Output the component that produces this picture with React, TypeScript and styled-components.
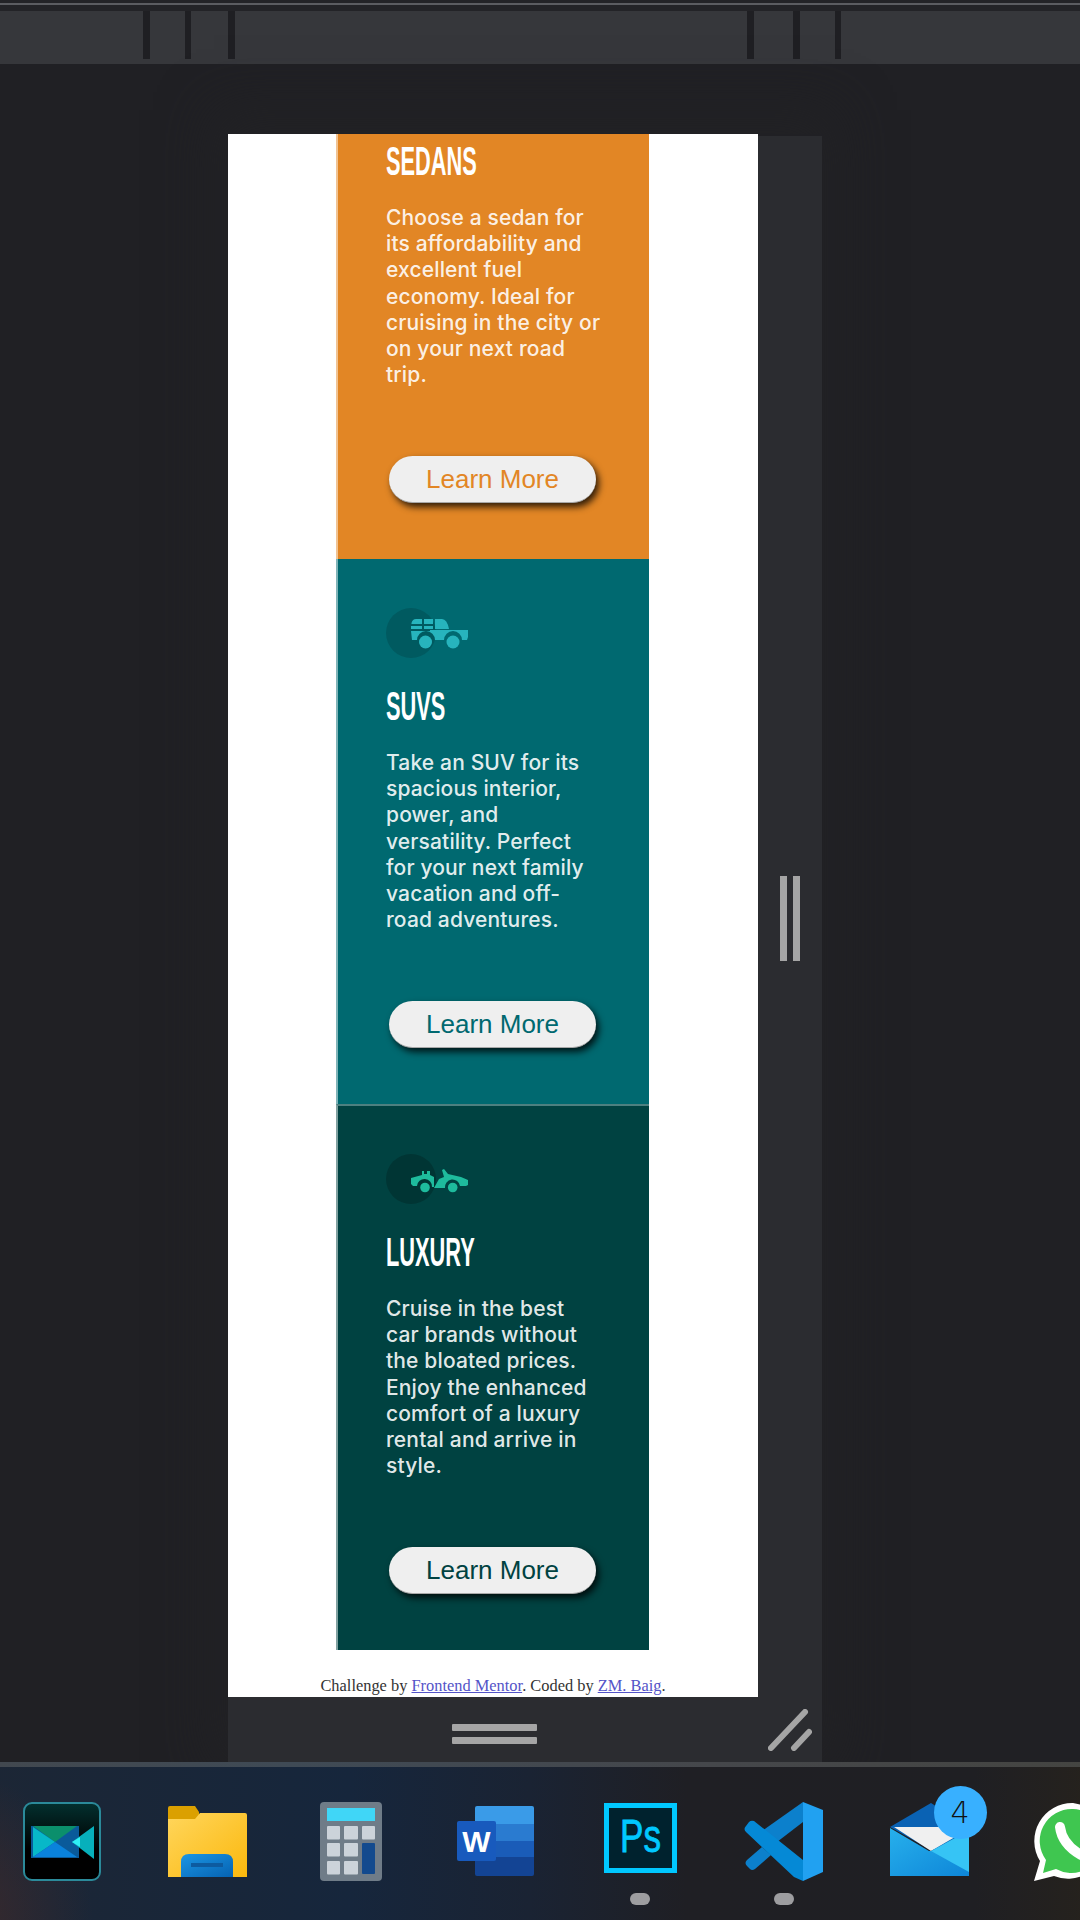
import React from 'react';
import styled, { createGlobalStyle } from 'styled-components';

const GlobalStyle = createGlobalStyle`
  html, body {
    margin: 0;
    padding: 0;
    background: #202024;
  }
`;

const Screen = styled.div`
  width: 1080px;
  height: 1920px;
  overflow: hidden;
  display: flex;
  flex-direction: column;
  background: #202024;
`;

const TopStrip = styled.div`
  height: 11px;
  box-sizing: border-box;
  padding-top: 3px;
  background: #232327;
  &::before {
    content: '';
    display: block;
    height: 2px;
    background: #5b5c61;
  }
`;

const Toolbar = styled.div`
  height: 53px;
  display: grid;
  grid-template-columns: 143px 7px 35px 6px 37px 7px 512px 7px 39px 7px 35px 6px 1fr;
  background: #36373b;
`;

const ToolbarCell = styled.div<{ $divider?: boolean }>`
  height: ${props => (props.$divider ? '48px' : 'auto')};
  background: ${props => (props.$divider ? '#1f1f23' : 'transparent')};
`;

const Workspace = styled.div`
  height: 1698px;
  box-sizing: border-box;
  padding: 70px 0 0 228px;
`;

const Frame = styled.div`
  display: grid;
  grid-template-columns: 530px 64px;
  grid-template-rows: 1563px 65px;
  width: 594px;
  box-shadow: 0 -10px 50px 14px #222225;
`;

const Viewport = styled.div`
  background: #fff;
  overflow: hidden;
  display: flex;
  flex-direction: column;
  align-items: center;
`;

const CardStack = styled.div`
  width: 313px;
  align-self: flex-start;
  margin-left: 108px;
`;

const Card = styled.section<{ $bg: string; $cropped?: boolean; $ruled?: boolean }>`
  width: 313px;
  box-sizing: border-box;
  padding: ${props => (props.$cropped ? '7px' : props.$ruled ? '48px' : '49px')} 48px 56px 48px;
  background: ${props => props.$bg};
  border-left: 2px solid rgba(255, 255, 255, 0.5);
  border-top: ${props => (props.$ruled ? '2px solid #4d8080' : 'none')};
  display: flex;
  flex-direction: column;
  align-items: flex-start;
`;

const IconCircle = styled.div<{ $bg: string }>`
  width: 50px;
  height: 50px;
  box-sizing: border-box;
  padding-left: 25px;
  margin-bottom: 28px;
  border-radius: 50%;
  background: ${props => props.$bg};
  display: flex;
  align-items: center;
`;

const Title = styled.h2`
  margin: 0 0 24px;
  height: 40px;
  font-family: 'Liberation Sans', Arial, sans-serif;
  font-size: 40px;
  font-weight: 700;
  line-height: 40px;
  color: #fff;
  white-space: nowrap;
  transform: scaleX(0.545);
  transform-origin: left center;
`;

const Body = styled.p`
  margin: 0 0 67px;
  height: 184px;
  font-family: Inter, 'Noto Sans', sans-serif;
  font-size: 21px;
  font-weight: 500;
  letter-spacing: 0.15px;
  line-height: 26.2px;
  color: rgba(255, 255, 255, 0.9);
  white-space: pre-line;
`;

const LearnButton = styled.button<{ $color: string }>`
  width: 207px;
  height: 47px;
  margin-left: 3px;
  padding: 0;
  border: none;
  border-bottom: 1px solid #a8a8a8;
  border-radius: 24px;
  background: #efefef;
  box-shadow: 3px 4px 7px rgba(0, 0, 0, 0.8);
  font-family: 'Liberation Sans', Arial, sans-serif;
  font-size: 26px;
  color: ${props => props.$color};
`;

const Footer = styled.footer`
  margin-top: 21px;
  font-family: 'Liberation Serif', 'Times New Roman', serif;
  font-size: 16.4px;
  line-height: 30px;
  color: #333;
  white-space: nowrap;
  a {
    color: #5454c8;
    text-decoration: underline;
  }
`;

const SidePanel = styled.div`
  margin-top: 2px;
  padding-top: 4px;
  background: #2b2c30;
  display: flex;
  align-items: center;
  justify-content: center;
  gap: 6px;
`;

const GripBar = styled.div`
  width: 7px;
  height: 85px;
  background: #a5a5a5;
`;

const BottomPanel = styled.div`
  background: #2b2c30;
  display: flex;
  flex-direction: column;
  align-items: center;
  justify-content: center;
  gap: 6px;
  padding: 9px 0 0 3px;
`;

const HandleBar = styled.div`
  width: 85px;
  height: 7px;
  border-radius: 1px;
  background: #a5a5a5;
`;

const CornerCell = styled.div`
  background: #2b2c30;
  position: relative;
`;

const CornerHandle = styled.svg`
  position: absolute;
  left: 10px;
  top: 12px;
`;

const Taskbar = styled.div`
  height: 158px;
  box-sizing: border-box;
  border-top: 5px solid transparent;
  background:
    linear-gradient(90deg, #42484f 0%, #3f4a55 25%, #45474b 60%, #44443f 100%) top / 100% 5px no-repeat border-box,
    radial-gradient(circle at -4% 100%, rgba(90, 45, 35, 0.55), transparent 12%) padding-box,
    linear-gradient(90deg, #1c2635 0%, #16263c 30%, #1a2333 45%, #1f1f24 58%, #1f1f23 82%, #2b2418 100%) padding-box;
  display: grid;
  grid-auto-flow: column;
  grid-auto-columns: 144.4px;
  margin-left: -10px;
  width: 1200px;
  padding-top: 35px;
  padding-left: 0;
`;

const TaskSlot = styled.div`
  display: flex;
  flex-direction: column;
  align-items: center;
`;

const TaskIcon = styled.div`
  position: relative;
  width: 80px;
  height: 80px;
  margin-bottom: 11px;
  svg {
    display: block;
  }
`;

const RunDot = styled.div`
  width: 20px;
  height: 12px;
  border-radius: 6px;
  background: #9d9da0;
`;

const MailBadge = styled.div`
  position: absolute;
  left: 45px;
  top: -16px;
  width: 53px;
  height: 53px;
  border-radius: 50%;
  background: #38b0ff;
  color: #111;
  font-family: 'DejaVu Sans', sans-serif;
  font-size: 30px;
  font-weight: 300;
  line-height: 53px;
  text-align: center;
`;

const SuvIcon = ({ color }: { color: string }) => (
  <svg width="57" height="31" viewBox="0 0 57 31" style={{ flex: 'none' }} fill={color}>
    <path d="M0.5 5 Q1.5 1 5 1 H11 V6 H0.5z M13 1 H22 V6 H13z M24 1 H31 Q36 1 38 11 H24z" />
    <path d="M0 8 H11 V11 H0z M13 8 H22 V11 H13z" />
    <path d="M0 13 H19 V12 H57 V19 L56 22 H51 A9 9 0 0 0 33 22 H24 A9 9 0 0 0 6 22 H1z" />
    <circle cx="14.5" cy="24" r="6.5" />
    <circle cx="42" cy="24" r="6.5" />
  </svg>
);

const LuxuryIcon = ({ color }: { color: string }) => (
  <svg width="57" height="24" viewBox="0 0 57 24" style={{ flex: 'none', marginTop: 3 }} fill={color}>
    <path d="M0 9 L11 6 V2 H13 V5 H16 V2 H19 V6 L23 8 V18 H21 A7.5 7.5 0 0 0 6 17 H2 L0 15z" />
    <path d="M23 19 L28 10 L33 8 L31 1 L33 0 L37 5 L50 8 L57 11 V16 L55 17 H49 A7.5 7.5 0 0 0 34 19z" />
    <circle cx="14" cy="18.5" r="4.8" />
    <circle cx="41.7" cy="18.5" r="4.8" />
  </svg>
);

const PlayerIcon = () => (
  <svg width="80" height="80" viewBox="0 0 80 80">
    <defs>
      <linearGradient id="playerBg" x1="0" y1="0" x2="0" y2="1">
        <stop offset="0" stopColor="#03302f" />
        <stop offset="0.6" stopColor="#000" />
      </linearGradient>
    </defs>
    <rect x="2" y="1" width="76" height="77" rx="8" fill="url(#playerBg)" stroke="#2b8a9a" strokeWidth="2" />
    <rect x="9" y="24" width="48" height="32" fill="#0a5a9a" />
    <polygon points="11,24 55,24 33,40" fill="#0b8f6c" />
    <polygon points="11,25 33,40 11,55" fill="#07b8c8" />
    <polygon points="11,55 33,40 55,55" fill="#0a82dc" />
    <polygon points="72,24 50,40 72,57" fill="#07b0bb" />
    <polygon points="58,35 50,40 58,45" fill="#2ff0f5" />
  </svg>
);

const FolderIcon = () => (
  <svg width="80" height="80" viewBox="0 0 80 80">
    <defs>
      <linearGradient id="folderFill" x1="0" y1="0" x2="1" y2="1">
        <stop offset="0" stopColor="#ffd65c" />
        <stop offset="1" stopColor="#fbb80d" />
      </linearGradient>
      <linearGradient id="trayFill" x1="0" y1="0" x2="1" y2="1">
        <stop offset="0" stopColor="#1c96e4" />
        <stop offset="1" stopColor="#0562b2" />
      </linearGradient>
    </defs>
    <path d="M1 6 Q1 4 3 4 H28 L32 10 V17 H1z" fill="#dba000" />
    <path d="M1 17 H28 L33 11 H78 Q80 11 80 13 V75 H1z" fill="url(#folderFill)" />
    <path d="M14 75 V60 Q14 52 22 52 H58 Q66 52 66 60 V75z" fill="url(#trayFill)" />
    <rect x="24" y="61" width="32" height="4" fill="#0d5ba0" />
  </svg>
);

const CalculatorIcon = () => (
  <svg width="80" height="80" viewBox="0 0 80 80">
    <rect x="9" y="0" width="62" height="79" rx="4" fill="#6f7c88" />
    <rect x="16" y="6" width="48" height="13" fill="#40d6f7" />
    {[24, 41, 59].map(y =>
      [16, 33, 51].map(x =>
        x === 51 && y > 24 ? null : <rect key={`${x}-${y}`} x={x} y={y} width={x === 33 ? 14 : 13} height="13.5" rx="1" fill="#ccd3da" />
      )
    )}
    <rect x="51" y="41" width="13" height="31" rx="1" fill="#134a8e" />
  </svg>
);

const WordIcon = () => (
  <svg width="80" height="80" viewBox="0 0 80 80">
    <path d="M22 4 H77 Q79 4 79 6 V22 H20 V6 Q20 4 22 4z" fill="#3a9be8" />
    <rect x="20" y="22" width="59" height="17" fill="#2a7bd0" />
    <rect x="20" y="39" width="59" height="16" fill="#1a5cb8" />
    <path d="M20 55 H79 V72 Q79 74 77 74 H22 Q20 74 20 72z" fill="#134494" />
    <rect x="2" y="19" width="39" height="40" rx="2" fill="#185abd" />
    <text x="21.5" y="50" textAnchor="middle" fontFamily="'Liberation Sans', sans-serif" fontWeight="700" fontSize="30" fill="#fff">W</text>
  </svg>
);

const PhotoshopIcon = () => (
  <svg width="80" height="80" viewBox="0 0 80 80">
    <rect x="6.5" y="3.5" width="68" height="65" fill="#00222e" stroke="#00c8ff" strokeWidth="5" />
    <text x="20" y="50" fontFamily="'Liberation Sans', sans-serif" fontSize="46" fill="#00c8ff" stroke="#00c8ff" strokeWidth="0.8" textLength="41" lengthAdjust="spacingAndGlyphs">Ps</text>
  </svg>
);

const CodeIcon = () => (
  <svg width="80" height="80" viewBox="0 0 80 80">
    <polygon points="59,0 59,20 33,40 18,29" fill="#0c80cc" />
    <path d="M18 45 L3 58 Q0 61 3 64 L6 67 Q8 69 11 67 L27 53z" fill="#0c80cc" />
    <path d="M10 19 L59 58 V79 L50 75 L2 30 Q-1 27 2 24 L5 20 Q7 18 10 19z" fill="#0589d6" />
    <polygon points="59,0 79,8 79,70 59,79" fill="#21a1f1" />
  </svg>
);

const MailIcon = () => (
  <svg width="80" height="80" viewBox="0 0 80 80">
    <defs>
      <linearGradient id="mailFront" x1="0" y1="0" x2="1" y2="1">
        <stop offset="0" stopColor="#27b0ec" />
        <stop offset="1" stopColor="#0e86d8" />
      </linearGradient>
    </defs>
    <polygon points="1,25 42,1 80,25 80,40 42,48" fill="#0a62b4" />
    <polygon points="5,25 60,25 66,35 42,49" fill="#f0f0f0" />
    <polygon points="1,26 40,49 42,49 80,35 80,74 1,74" fill="url(#mailFront)" />
    <polygon points="42,49 66,36 80,35 80,70" fill="#36c4f5" />
  </svg>
);

const ChatIcon = () => (
  <svg width="80" height="80" viewBox="0 0 80 80">
    <path d="M40 1 A38 38 0 1 1 21 74 L1 79 L7 59 A38 38 0 0 1 40 1z" fill="#fff" />
    <path d="M40 7 A32 32 0 1 1 23 67 L10 71 L13 58 A32 32 0 0 1 40 7z" fill="#3fc650" />
    <path d="M27 25 Q29 42 48 53" fill="none" stroke="#fff" strokeWidth="10" strokeLinecap="round" />
  </svg>
);

const cards = [
  {
    title: 'SEDANS',
    text: 'Choose a sedan for\nits affordability and\nexcellent fuel\neconomy. Ideal for\ncruising in the city or\non your next road\ntrip.',
    bg: '#e28625',
    accent: '#e28625',
    cropped: true,
  },
  {
    title: 'SUVS',
    text: 'Take an SUV for its\nspacious interior,\npower, and\nversatility. Perfect\nfor your next family\nvacation and off-\nroad adventures.',
    bg: '#006970',
    accent: '#006970',
    circle: '#005a60',
    icon: <SuvIcon color="#27b4bd" />,
  },
  {
    title: 'LUXURY',
    text: 'Cruise in the best\ncar brands without\nthe bloated prices.\nEnjoy the enhanced\ncomfort of a luxury\nrental and arrive in\nstyle.',
    bg: '#004241',
    accent: '#004241',
    circle: '#003534',
    ruled: true,
    icon: <LuxuryIcon color="#1ebb9d" />,
  },
];

const toolbarCells = [false, true, false, true, false, true, false, true, false, true, false, true, false];

const App: React.FC = () => {
  return (
    <Screen>
      <GlobalStyle />
      <TopStrip />
      <Toolbar>
        {toolbarCells.map((divider, i) => (
          <ToolbarCell key={i} $divider={divider} />
        ))}
      </Toolbar>

      <Workspace>
        <Frame>
          <Viewport>
            <CardStack>
              {cards.map(card => (
                <Card key={card.title} $bg={card.bg} $cropped={card.cropped} $ruled={card.ruled}>
                  {card.icon && <IconCircle $bg={card.circle as string}>{card.icon}</IconCircle>}
                  <Title>{card.title}</Title>
                  <Body>{card.text}</Body>
                  <LearnButton $color={card.accent}>Learn More</LearnButton>
                </Card>
              ))}
            </CardStack>
            <Footer>
              Challenge by <a href="#">Frontend Mentor</a>. Coded by <a href="#">ZM. Baig</a>.
            </Footer>
          </Viewport>
          <SidePanel>
            <GripBar />
            <GripBar />
          </SidePanel>
          <BottomPanel>
            <HandleBar />
            <HandleBar />
          </BottomPanel>
          <CornerCell>
            <CornerHandle width="44" height="42" viewBox="0 0 44 42">
              <path d="M3 39 L37 3 M26 39 L41 23" stroke="#a5a5a5" strokeWidth="6" strokeLinecap="round" />
            </CornerHandle>
          </CornerCell>
        </Frame>
      </Workspace>

      <Taskbar>
        <TaskSlot><TaskIcon><PlayerIcon /></TaskIcon></TaskSlot>
        <TaskSlot><TaskIcon><FolderIcon /></TaskIcon></TaskSlot>
        <TaskSlot><TaskIcon><CalculatorIcon /></TaskIcon></TaskSlot>
        <TaskSlot><TaskIcon><WordIcon /></TaskIcon></TaskSlot>
        <TaskSlot><TaskIcon><PhotoshopIcon /></TaskIcon><RunDot /></TaskSlot>
        <TaskSlot><TaskIcon><CodeIcon /></TaskIcon><RunDot /></TaskSlot>
        <TaskSlot>
          <TaskIcon>
            <MailIcon />
            <MailBadge>4</MailBadge>
          </TaskIcon>
        </TaskSlot>
        <TaskSlot><TaskIcon><ChatIcon /></TaskIcon></TaskSlot>
      </Taskbar>
    </Screen>
  );
};

export default App;
